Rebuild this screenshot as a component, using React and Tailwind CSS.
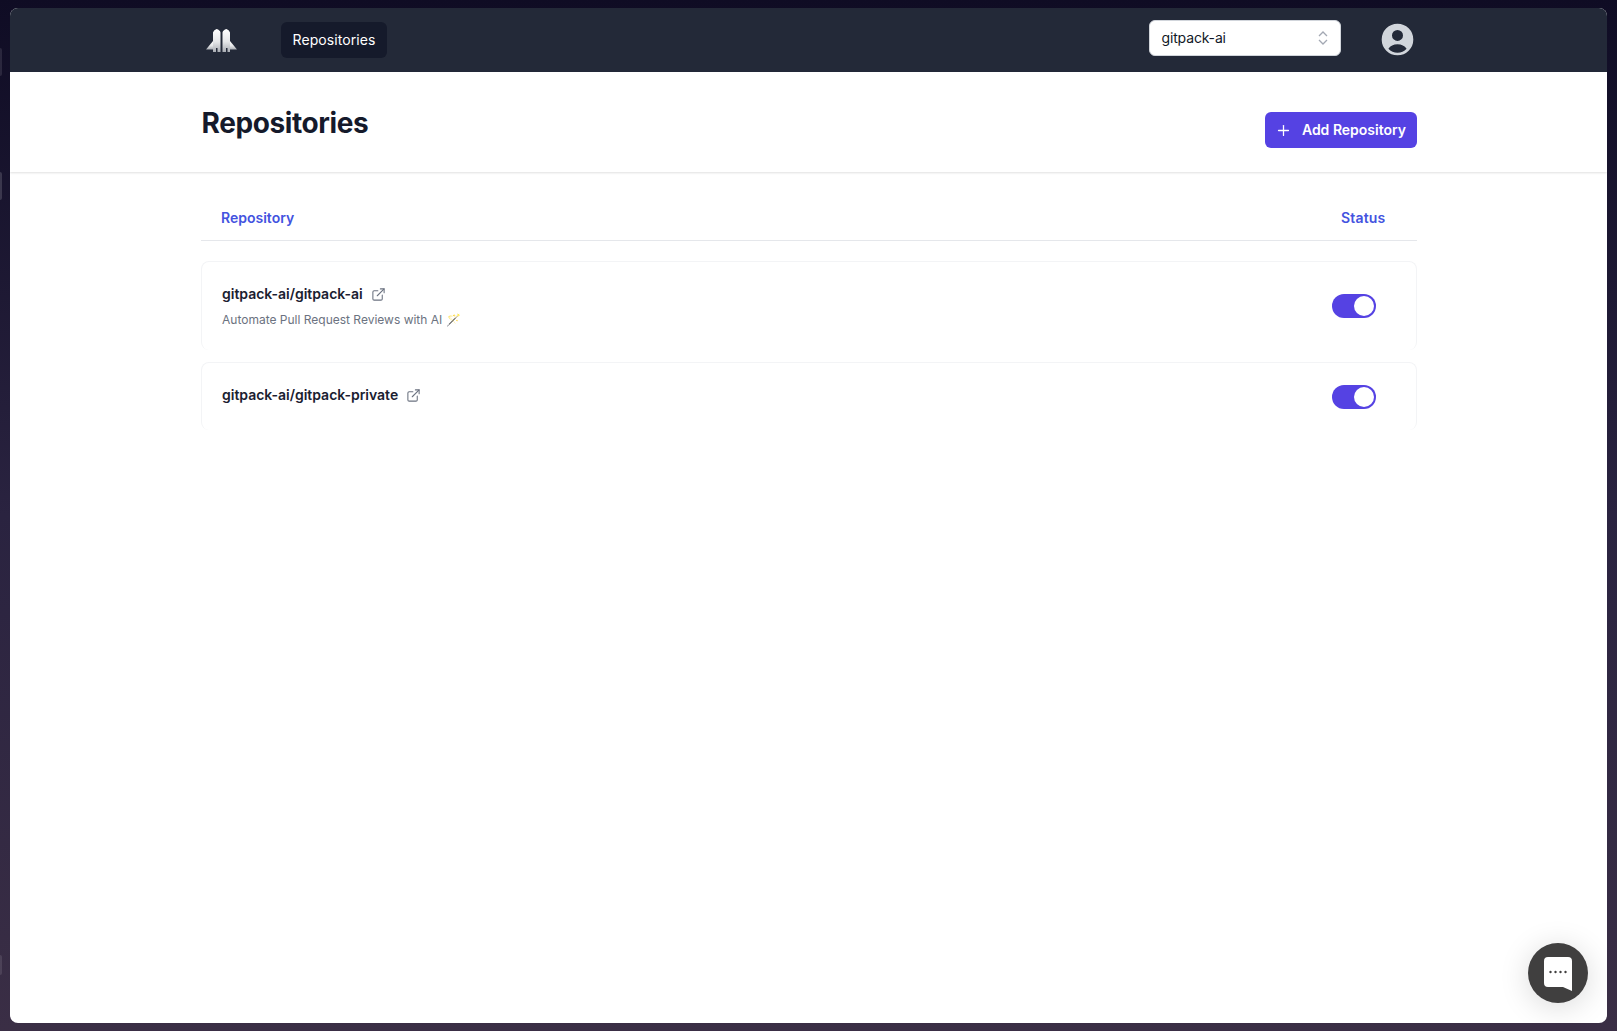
import { Plus, ExternalLink } from 'lucide-react'

const repositories = [
  { name: 'gitpack-ai/gitpack-ai', description: 'Automate Pull Request Reviews with AI 🪄' },
  { name: 'gitpack-ai/gitpack-private' },
]

function Logo() {
  return (
    <svg width="31" height="23" viewBox="0 0 31 23" aria-hidden="true">
      <defs>
        <linearGradient id="rocket" x1="0" y1="0" x2="0" y2="1">
          <stop offset="0" stopColor="#ffffff" />
          <stop offset="0.55" stopColor="#e6e7e9" />
          <stop offset="1" stopColor="#a9acb3" />
        </linearGradient>
      </defs>
      <path fill="url(#rocket)" d="M0 20.5 L7 12 V20.5 Z" />
      <path fill="url(#rocket)" d="M31 20.5 L24 12 V20.5 Z" />
      <path fill="url(#rocket)" d="M7 23 V3.5 Q7.5 1 10.5 0 Q14 1 14.5 3.5 V23 H11.5 V19 H10 V23 Z" />
      <path fill="url(#rocket)" d="M16.5 23 V3.5 Q17 1 20.5 0 Q23.5 1 24 3.5 V23 H21.5 V19 H20 V23 Z" />
    </svg>
  )
}

function Avatar() {
  return (
    <svg className="size-[33px]" viewBox="0 0 24 24" fill="#d1d5db" aria-hidden="true">
      <path
        fillRule="evenodd"
        clipRule="evenodd"
        d="M12 0.5a11.5 11.5 0 1 0 0 23a11.5 11.5 0 0 0 0-23ZM12 5a4 4 0 1 1 0 8a4 4 0 0 1 0-8ZM12 15.5c2.9 0 5.3 1.2 6.6 3.2a8.8 8.8 0 0 1-13.2 0c1.3-2 3.7-3.2 6.6-3.2Z"
      />
    </svg>
  )
}

function UpDown() {
  return (
    <svg width="12" height="16" viewBox="0 0 12 16" fill="none" stroke="#a3a8b3" strokeWidth="1.3" aria-hidden="true">
      <path d="M2 6 L6 2 L10 6" />
      <path d="M2 10 L6 14 L10 10" />
    </svg>
  )
}

function Toggle() {
  return (
    <div className="flex h-6 w-11 items-center justify-end rounded-full bg-[#5542e3] pr-0.5">
      <span className="size-5 rounded-full bg-white" />
    </div>
  )
}

function RepositoryCard({ repo }) {
  const tall = Boolean(repo.description)
  return (
    <div
      className={`flex justify-between rounded-lg border border-b-0 border-[#f3f4f6] pr-[40px] pl-[20.5px] ${tall ? 'h-[89px] items-center' : 'h-[68px] items-start pt-[22px]'}`}
    >
      <div>
        <div className="flex items-center gap-2">
          <span className="text-[14px] leading-5 font-semibold tracking-[-0.02px] text-[#1a2030]">{repo.name}</span>
          <ExternalLink className="size-[15px] text-[#6b7280]" strokeWidth={1.7} />
        </div>
        {repo.description && (
          <p className="mt-[8px] text-[12px] leading-4 text-[#6b7280]">{repo.description}</p>
        )}
      </div>
      <Toggle />
    </div>
  )
}

export default function App() {
  return (
    <div className="relative h-[1031px] overflow-hidden bg-gradient-to-b from-[#0f0c24] via-[#2a2340] to-[#3a2e45] pt-2 pr-2.5 pb-2 pl-2.5 font-['Inter',sans-serif]">
      <span className="absolute top-[48px] left-0 h-[28px] w-[2px] rounded-r bg-white/10" />
      <span className="absolute top-[172px] left-0 h-[28px] w-[2px] rounded-r bg-white/15" />
      <span className="absolute top-[955px] left-0 h-[20px] w-[2px] rounded-r bg-white/10" />
      <div className="relative flex h-full flex-col overflow-hidden rounded-lg bg-white">
        <nav className="flex h-[64px] shrink-0 justify-center bg-[#232938]">
          <div className="flex w-[1216px] items-center justify-between">
            <div className="flex items-center">
              <div className="ml-[5px] flex w-[75px] items-center">
                <Logo />
              </div>
              <span className="rounded-md bg-[#151a2b] px-3 py-2 text-[14px] leading-5 tracking-[0.08px] text-white">
                Repositories
              </span>
            </div>
            <div className="flex items-center">
              <div className="mt-[-4px] flex h-[36px] w-[192px] items-center justify-between rounded-md border border-[#d1d5db] bg-white pr-[11px] pl-3 text-[14px] tracking-[-0.15px] text-[#111827]">
                <span className="mt-[-1px]">gitpack-ai</span>
                <UpDown />
              </div>
              <div className="mt-[-1px] mr-[3px] ml-[40px]">
                <Avatar />
              </div>
            </div>
          </div>
        </nav>

        <header className="flex h-[100px] shrink-0 justify-center shadow-[0_1px_2px_rgba(0,0,0,0.12)]">
          <div className="flex w-[1216px] items-start justify-between">
            <h1 className="mt-[33px] ml-[1px] text-[28px] leading-9 font-bold tracking-[-0.4px] text-[#151a2b]">Repositories</h1>
            <button className="mt-[40px] flex h-9 w-[152px] items-center justify-center gap-2.5 rounded-md bg-[#5542e3] text-[14px] font-semibold text-white">
              <Plus className="size-[17px]" strokeWidth={1.8} />
              <span className="mt-[-1px]">Add Repository</span>
            </button>
          </div>
        </header>

        <main className="flex justify-center">
          <div className="w-[1216px]">
            <div className="flex h-[69px] items-center justify-between border-b border-[#e5e7eb] pt-[22px] pr-5 pl-[20.5px] text-[14px] font-semibold text-[#4353e0]">
              <span>Repository</span>
              <span className="mr-[11px] tracking-[0.2px]">Status</span>
            </div>
            <div className="mt-5 flex flex-col gap-3">
              {repositories.map((repo) => (
                <RepositoryCard key={repo.name} repo={repo} />
              ))}
            </div>
          </div>
        </main>

        <button className="absolute right-[19px] bottom-[20px] flex size-[60px] items-center justify-center rounded-full bg-[#403f3f] shadow-[0_4px_30px_rgba(0,0,0,0.15)]">
          <svg width="28" height="34" viewBox="0 0 28 34" className="mt-[1px]" aria-hidden="true">
            <path
              fill="#ffffff"
              d="M4 0h20a4 4 0 0 1 4 4v30l-9-4H4a4 4 0 0 1-4-4V4a4 4 0 0 1 4-4Z"
            />
            <g fill="#403f3f">
              <circle cx="6.5" cy="15" r="1.2" />
              <circle cx="11.5" cy="15" r="1.2" />
              <circle cx="16.5" cy="15" r="1.2" />
              <circle cx="21.5" cy="15" r="1.2" />
            </g>
          </svg>
        </button>
      </div>
    </div>
  )
}
